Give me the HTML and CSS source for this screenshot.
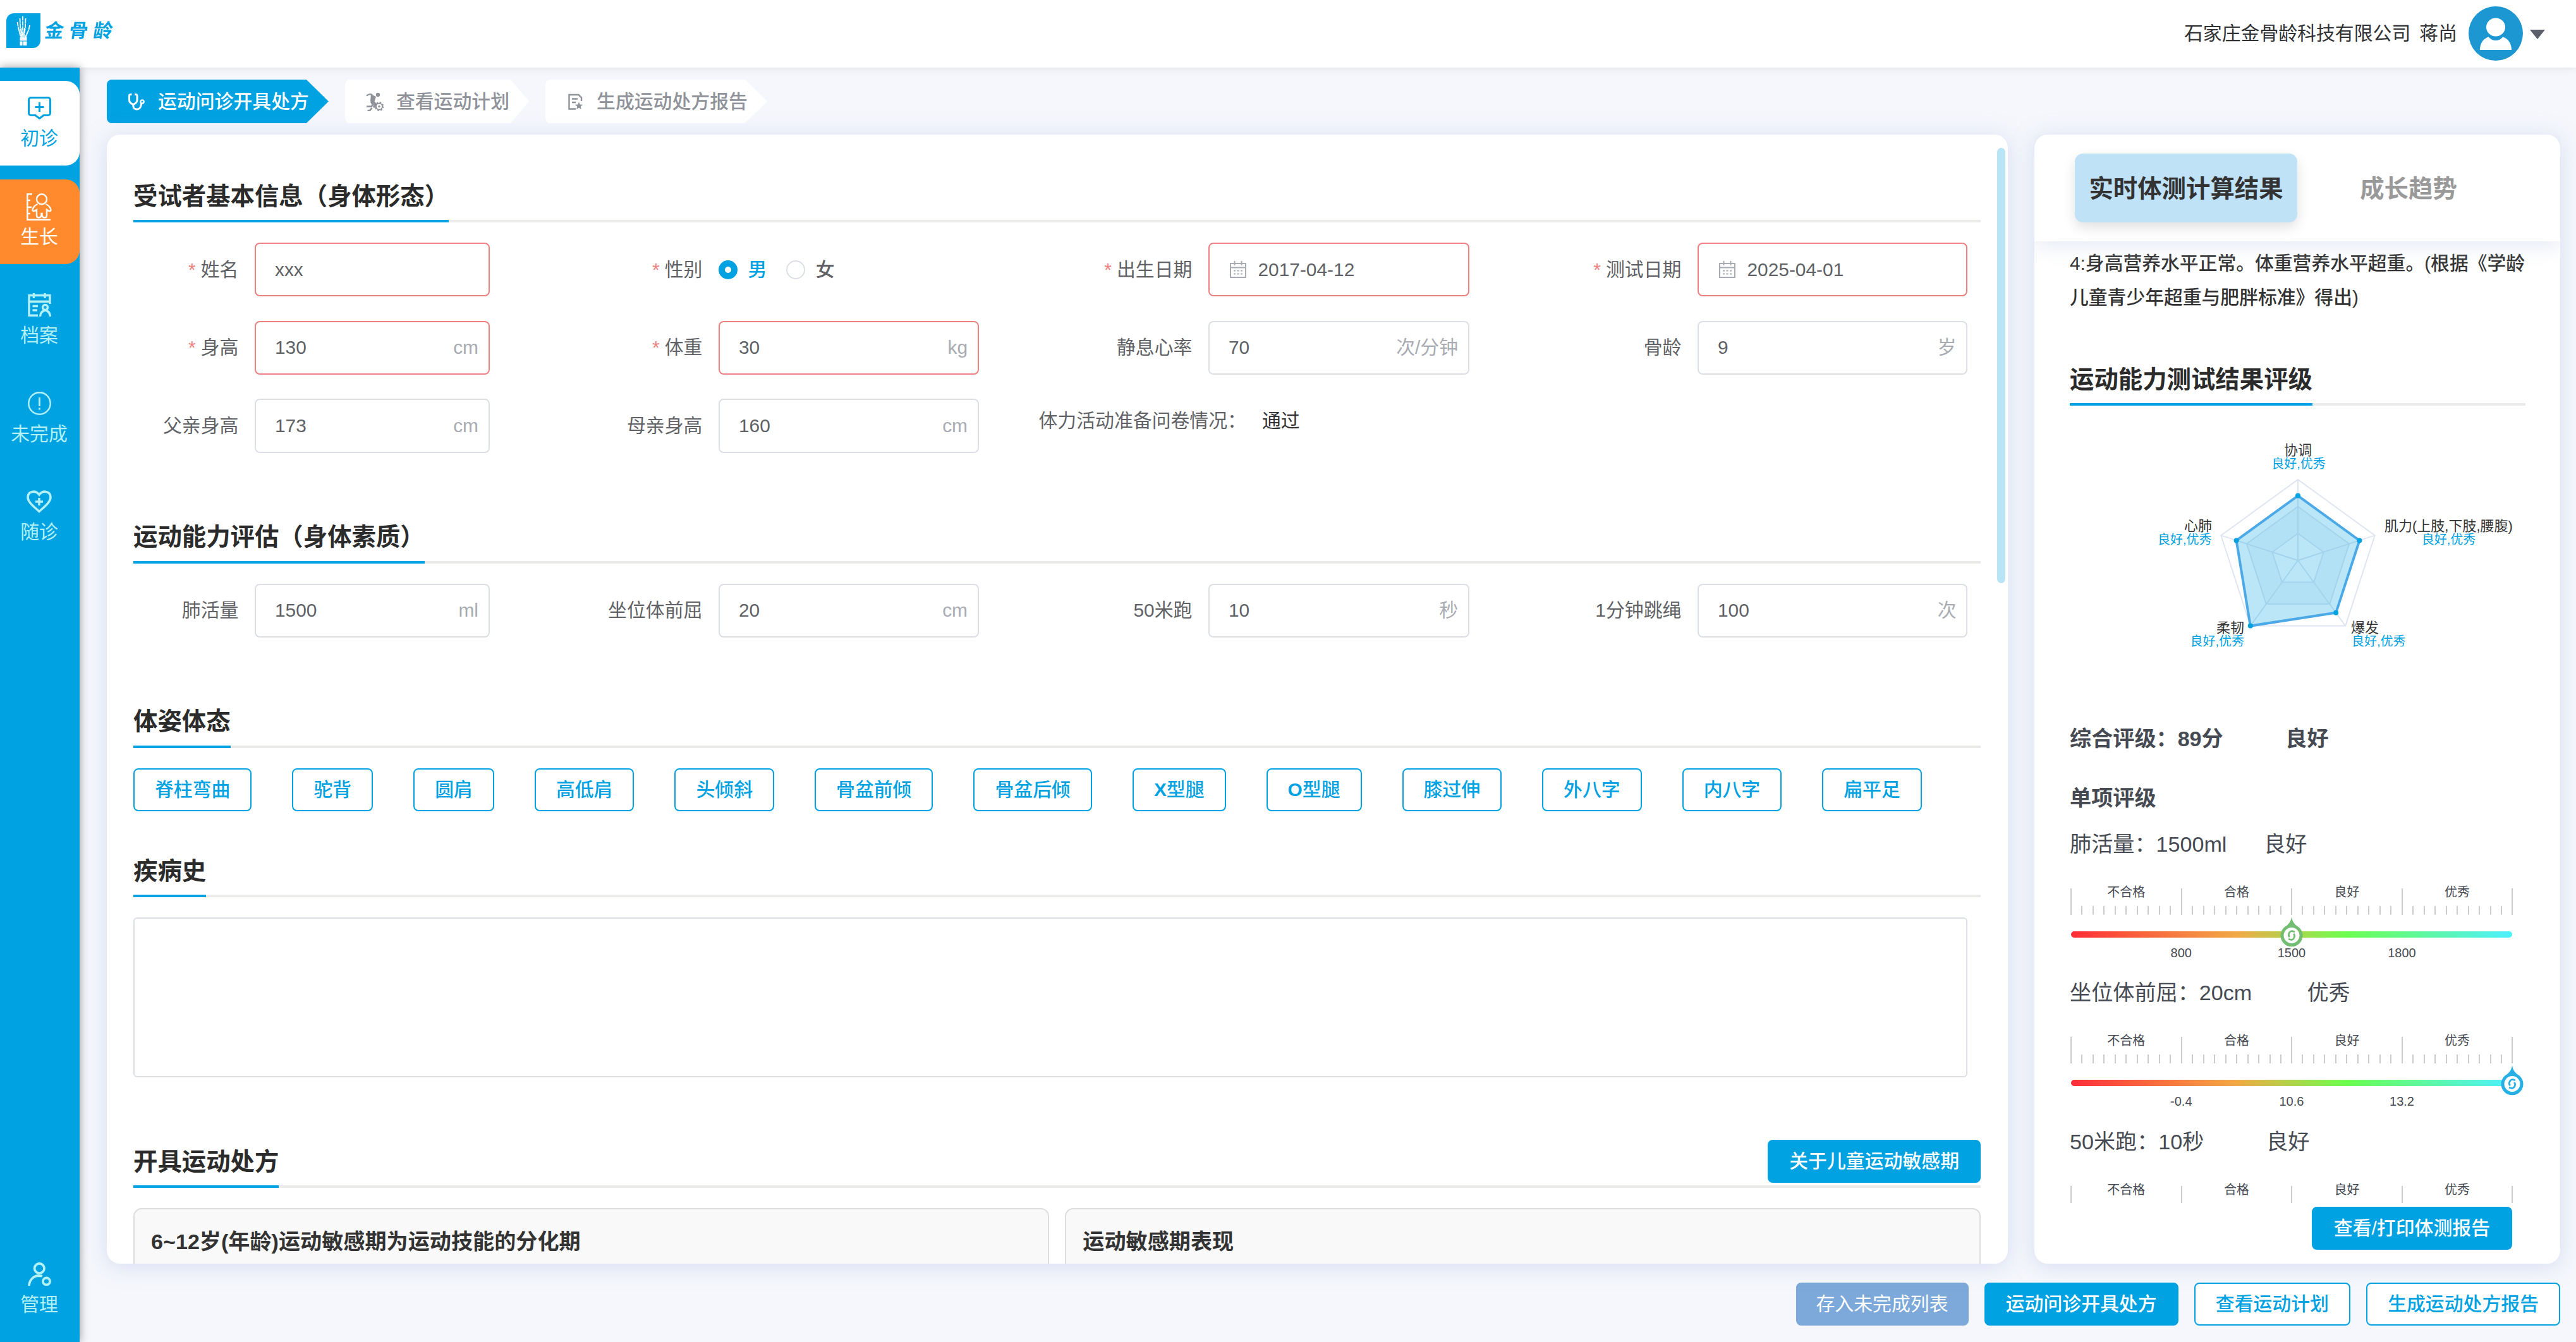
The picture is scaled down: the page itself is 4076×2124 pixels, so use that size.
FILE: index.html
```html
<!DOCTYPE html>
<html lang="zh-CN">
<head>
<meta charset="utf-8">
<title>金骨龄</title>
<link rel="stylesheet" href="styles.css">
</head>
<body>
<svg class="defs" width="0" height="0" aria-hidden="true">
  <symbol id="i-cal" viewBox="0 0 28 27"><path d="M2 4h24v22H2zM2 10.500h24M8.500 0v7M19.500 0v7" fill="none" stroke="currentColor" stroke-width="2"/><path d="M7 15.500h3M12.500 15.500h3M18 15.500h3M7 20.500h3M12.500 20.500h3M18 20.500h3" stroke="currentColor" stroke-width="2"/></symbol>
  <symbol id="i-pin" viewBox="0 0 36 48"><path d="M18 0C19 7 22 11 26.500 14.500A17.500 17.500 0 1 1 9.500 14.500C14 11 17 7 18 0z" fill="currentColor"/><circle cx="18" cy="29.500" r="12.500" fill="#fff"/><path transform="rotate(22 18 29.500)" d="M20.500 22.500h-2.500a5 5 0 0 0-5 5v1.500c0 2 1 3 3 4M15.500 36.500h2.500a5 5 0 0 0 5-5V30c0-2-1-3-3-4" fill="none" stroke="currentColor" stroke-width="2.800"/></symbol>
</svg>

<header class="topbar">
  <div class="brand">
    <svg class="brand-mark" width="54" height="55" viewBox="0 0 54 55">
      <path d="M12 0H54V43a12 12 0 0 1-12 12H0V12A12 12 0 0 1 12 0z" fill="#00a2e2"/>
      <g stroke="#fff" stroke-width="1.800" fill="none">
        <path d="M17.500 14l1.500 9 4 15M21.500 8l.5 14 3 15M26 4.500V37M30.500 8l-.5 14-2 15M37 19l-1.500 7-5 12" stroke-dasharray="7 1"/>
        <path d="M19.500 24l4.500 13M23.500 23l1.500 14M28.500 23l-1 14M33.500 30l-4 8" stroke-width="1.200"/>
      </g>
      <path d="M21.500 37.500h11v6h-11zM21.500 44.500h4v6.500h-4zM26.500 44.500h6v6.500h-6z" fill="#fff"/>
    </svg>
    <span class="brand-name">金骨龄</span>
  </div>
  <div class="account">
    <span class="org">石家庄金骨龄科技有限公司</span>
    <span class="user">蒋尚</span>
    <svg class="avatar" width="86" height="86" viewBox="0 0 86 86"><circle cx="43" cy="43" r="43" fill="#1d97d1"/><path d="M18 69C18 57 25 50 32 48.500c3 4 6.500 5.500 11 5.500s8-1.500 11-5.500C62 50.500 68 58 68 69z" fill="#fff"/><ellipse cx="43" cy="33" rx="15" ry="14.500" fill="#fff"/></svg>
    <i class="caret"></i>
  </div>
</header>

<div class="shell">
  <nav class="side">
    <a class="nav current">
      <svg width="37" height="36" viewBox="0 0 37 36" fill="none" stroke="currentColor" stroke-width="3"><path d="M5 1.500H32a3.500 3.500 0 0 1 3.500 3.500V26a3.500 3.500 0 0 1-3.500 3.500H25l-6.500 5L12 29.500H5A3.500 3.500 0 0 1 1.500 26V5A3.500 3.500 0 0 1 5 1.500zM18.500 9v15M11.500 16.500h14"/></svg>
      <span>初诊</span>
    </a>
    <a class="nav growth">
      <svg width="40" height="43" viewBox="0 0 40 43" fill="none" stroke="currentColor" stroke-width="2.400"><path d="M9 1.300H1.300V41.700H38M1.300 11H6M1.300 22H8M1.300 32H6"/><ellipse cx="24" cy="9.300" rx="8" ry="8"/><path d="M17.500 17C13 19 10 23 9.500 26.500c0 2.500 3.500 2 6.500-.5V35c0 4.500 6.500 4.500 7.500 0v-3h1v3c1 4.500 7.500 4.500 7.500 0V26c3 2.500 6.500 3 6.500.5C38 23 35 19 30.500 17"/></svg>
      <span>生长</span>
    </a>
    <a class="nav">
      <svg width="37" height="37" viewBox="0 0 37 37" fill="none" stroke="currentColor" stroke-width="3.400"><path d="M35 17V3.500H2V35.200H16M2 13.200H35M9.500 0V8M27 0V8M7.500 20.500H16M7.500 27H15"/><circle cx="27.500" cy="22.500" r="4"/><path d="M19.500 37c.5-6 3-9 8-10 5 1 7.500 4 8 10"/></svg>
      <span>档案</span>
    </a>
    <a class="nav">
      <svg width="37" height="37" viewBox="0 0 37 37" fill="none" stroke="currentColor" stroke-width="2.400"><circle cx="18.500" cy="18.500" r="17.200"/><path d="M18.500 9V23M18.500 25.500V28.500" stroke-width="2.800"/></svg>
      <span>未完成</span>
    </a>
    <a class="nav">
      <svg width="40" height="36" viewBox="0 0 40 36" fill="none" stroke="currentColor" stroke-width="3.600"><path d="M20 33.500C13 27 2 19 2 11 2 1.500 14-1 20 7 26-1 38 1.500 38 11 38 19 27 27 20 33.500z"/><path d="M20 12V24M14 18H26"/></svg>
      <span>随诊</span>
    </a>
    <a class="nav manage">
      <svg width="37" height="37" viewBox="0 0 37 37" fill="none" stroke="currentColor" stroke-width="3.800"><circle cx="18.300" cy="9.500" r="7.700"/><path d="M2 37C2.500 27 10 21 17 21l6 .7"/><circle cx="29.500" cy="30" r="5.500"/></svg>
      <span>管理</span>
    </a>
  </nav>

  <main class="page">
    <div class="steps">
      <div class="step on">
        <svg width="30" height="30" viewBox="0 0 30 30" fill="none" stroke="currentColor" stroke-width="3"><path d="M8.500 3.500H7A2.500 2.500 0 0 0 4.500 6V12c0 3.500 2.500 6 6.300 7.300C14.500 18 17 15.500 17 12V6a2.500 2.500 0 0 0-2.500-2.500H13M10.800 19v2.500c0 3.500 2.500 5.500 5.700 5.500s6-2.500 6.500-6l1-3.500"/><circle cx="25" cy="15" r="2.600" stroke-width="2.400"/></svg>
        <span>运动问诊开具处方</span>
      </div>
      <div class="step">
        <svg width="30" height="30" viewBox="0 0 30 30" fill="none" stroke="currentColor"><circle cx="21" cy="4" r="3.200" fill="currentColor" stroke="none"/><path d="M3 5.500C6 3 9 2.500 12 4" stroke-width="2.400"/><path d="M10 3l8 4-2.500 7.500L19 18l-2 7-4-1 1-5-5-5z" fill="currentColor" stroke="none"/><path d="M10 14.500l2.500 5-1.500 3H3M11.500 25L8 29H4.500" stroke-width="2.600"/><circle cx="23" cy="22.500" r="5" stroke-width="1.800" fill="#fff"/><circle cx="23" cy="22.500" r="6.400" stroke-width="1.800" stroke-dasharray="2.500 2.520"/><circle cx="23" cy="22.500" r="1.700" fill="currentColor" stroke="none"/></svg>
        <span>查看运动计划</span>
      </div>
      <div class="step">
        <svg width="30" height="30" viewBox="0 0 30 30" fill="none" stroke="currentColor" stroke-width="2.400"><path d="M26 14V8.500L21.500 4H6.500V26.500H17M11 10.500H20M11 16H17"/><path d="M22 15.500l1.800 3.900 4.200.4-3.200 2.800 1 4.200-3.800-2.200-3.800 2.200 1-4.200L16 19.800l4.200-.4z" fill="currentColor" stroke="none"/></svg>
        <span>生成运动处方报告</span>
      </div>
    </div>

    <div class="columns">
      <section class="card form-card">
        <i class="scroll-thumb"></i>
        <div class="sec-head first"><h2>受试者基本信息（身体形态）</h2></div>
        <div class="fields">
          <label class="req">姓名</label><div class="input must"><b>xxx</b></div>
          <label class="req">性别</label>
          <div class="radios"><i class="dot picked"></i><span class="picked-text">男</span><i class="dot"></i><span>女</span></div>
          <label class="req">出生日期</label><div class="input must"><svg width="28" height="27"><use href="#i-cal"/></svg><b>2017-04-12</b></div>
          <label class="req">测试日期</label><div class="input must"><svg width="28" height="27"><use href="#i-cal"/></svg><b>2025-04-01</b></div>

          <label class="req">身高</label><div class="input must"><b>130</b><em>cm</em></div>
          <label class="req">体重</label><div class="input must"><b>30</b><em>kg</em></div>
          <label>静息心率</label><div class="input"><b>70</b><em>次/分钟</em></div>
          <label>骨龄</label><div class="input"><b>9</b><em>岁</em></div>

          <label>父亲身高</label><div class="input"><b>173</b><em>cm</em></div>
          <label>母亲身高</label><div class="input"><b>160</b><em>cm</em></div>
          <div class="survey"><span>体力活动准备问卷情况：</span><strong>通过</strong></div>
        </div>

        <div class="sec-head"><h2>运动能力评估（身体素质）</h2></div>
        <div class="fields">
          <label>肺活量</label><div class="input"><b>1500</b><em>ml</em></div>
          <label>坐位体前屈</label><div class="input"><b>20</b><em>cm</em></div>
          <label>50米跑</label><div class="input"><b>10</b><em>秒</em></div>
          <label>1分钟跳绳</label><div class="input"><b>100</b><em>次</em></div>
        </div>

        <div class="sec-head"><h2>体姿体态</h2></div>
        <div class="chips">
          <button class="btn line">脊柱弯曲</button><button class="btn line">驼背</button><button class="btn line">圆肩</button><button class="btn line">高低肩</button><button class="btn line">头倾斜</button><button class="btn line">骨盆前倾</button><button class="btn line">骨盆后倾</button><button class="btn line"><b>X</b>型腿</button><button class="btn line"><b>O</b>型腿</button><button class="btn line">膝过伸</button><button class="btn line">外八字</button><button class="btn line">内八字</button><button class="btn line">扁平足</button>
        </div>

        <div class="sec-head near"><h2>疾病史</h2></div>
        <div class="history"></div>

        <div class="sec-head with-action"><h2>开具运动处方</h2><button class="btn solid">关于儿童运动敏感期</button></div>
        <div class="panels">
          <div class="panel">6~12岁(年龄)运动敏感期为运动技能的分化期</div>
          <div class="panel">运动敏感期表现</div>
        </div>
      </section>

      <aside class="card result-card">
        <div class="tabs"><div class="tab active">实时体测计算结果</div><div class="tab">成长趋势</div></div>
        <div class="result-scroll">
          <p class="note">4:身高营养水平正常。体重营养水平超重。(根据《学龄儿童青少年超重与肥胖标准》得出)</p>
          <div class="sec-head sub"><h2>运动能力测试结果评级</h2></div>
          <svg class="radar" width="721" height="420" viewBox="3275 642 721 420">
            <g fill="none" stroke="#e0e6f1" stroke-width="2">
              <path d="M3636 801.700L3717.100 860.600 3686.200 956 3585.800 956 3554.900 860.600z" fill="#f5f7fb"/>
              <path d="M3636 844.300L3676.600 873.800 3661.100 921.500 3610.900 921.500 3595.400 873.800z" fill="#fff"/>
              <path d="M3636 759L3757.700 847.400 3711.200 990.600 3560.800 990.600 3514.300 847.400z"/>
              <path d="M3636 887V759M3636 887L3757.700 847.400M3636 887L3711.200 990.600M3636 887L3560.800 990.600M3636 887L3514.300 847.400"/>
            </g>
            <path d="M3636 784.600L3733.400 855.400 3696.200 969.800 3560.800 990.600 3538.600 855.400z" fill="#00a2e2" fill-opacity=".27" stroke="#4ba9e8" stroke-width="4"/>
            <g fill="#00a2e2"><circle cx="3636" cy="784.600" r="4"/><circle cx="3733.400" cy="855.400" r="4"/><circle cx="3696.200" cy="969.800" r="4"/><circle cx="3560.800" cy="990.600" r="4"/><circle cx="3538.600" cy="855.400" r="4"/></g>
            <g class="axis">
              <text x="3636" y="720" text-anchor="middle">协调</text>
              <text x="3874.500" y="840" text-anchor="middle">肌力(上肢,下肢,腰腹)</text>
              <text x="3500" y="840" text-anchor="end">心肺</text>
              <text x="3551" y="1001" text-anchor="end">柔韧</text>
              <text x="3720" y="1001">爆发</text>
            </g>
            <g class="grade">
              <text x="3637" y="740.500" text-anchor="middle">良好,优秀</text>
              <text x="3874.500" y="861" text-anchor="middle">良好,优秀</text>
              <text x="3499.500" y="861" text-anchor="end">良好,优秀</text>
              <text x="3551" y="1022" text-anchor="end">良好,优秀</text>
              <text x="3721" y="1022">良好,优秀</text>
            </g>
          </svg>
          <div class="line-item strong overall">综合评级：<span class="val">89分</span>良好</div>
          <div class="line-item strong single">单项评级</div>

          <div class="metric">
            <div class="line-item">肺活量：<span class="val">1500ml</span>良好</div>
            <div class="ruler"><span>不合格</span><span>合格</span><span>良好</span><span>优秀</span></div>
            <div class="bar"><svg class="pin good" width="36" height="48"><use href="#i-pin"/></svg></div>
            <div class="marks"><span>800</span><span>1500</span><span>1800</span></div>
          </div>
          <div class="metric">
            <div class="line-item">坐位体前屈：<span class="val">20cm</span>优秀</div>
            <div class="ruler"><span>不合格</span><span>合格</span><span>良好</span><span>优秀</span></div>
            <div class="bar"><svg class="pin best" width="36" height="48"><use href="#i-pin"/></svg></div>
            <div class="marks"><span>-0.4</span><span>10.6</span><span>13.2</span></div>
          </div>
          <div class="metric">
            <div class="line-item">50米跑：<span class="val">10秒</span>良好</div>
            <div class="ruler"><span>不合格</span><span>合格</span><span>良好</span><span>优秀</span></div>
          </div>
        </div>
        <div class="result-foot"><button class="btn solid report">查看/打印体测报告</button></div>
      </aside>
    </div>

    <footer class="actions">
      <button class="btn muted">存入未完成列表</button>
      <button class="btn solid">运动问诊开具处方</button>
      <button class="btn line">查看运动计划</button>
      <button class="btn line">生成运动处方报告</button>
    </footer>
  </main>
</div>
</body>
</html>
```
FILE: styles.css
```css
* { box-sizing: border-box; }
body {
  margin: 0;
  width: 4076px;
  height: 2124px;
  overflow: hidden;
  display: flex;
  flex-direction: column;
  background: #f5f7fc;
  color: #303133;
  font: 29.87px/48px "Liberation Sans", "Noto Sans CJK SC", sans-serif;
}
h2, p { margin: 0; font-weight: 500; }
i, em { font-style: normal; }
.defs { position: absolute; }
svg { display: block; flex: none; }

/* top bar */
.topbar {
  height: 107px;
  flex: none;
  display: flex;
  justify-content: space-between;
  background: #fff;
  box-shadow: 0 2px 12px rgba(0, 0, 0, .08);
}
.brand { display: flex; align-items: flex-start; padding: 21px 0 0 10px; gap: 7px; }
.brand-name {
  color: #00a2e2;
  font-size: 30px;
  font-weight: 700;
  letter-spacing: 8.500px;
  line-height: 56px;
  transform: skewX(-8deg);
}
.account { display: flex; align-items: center; height: 106px; padding-right: 49px; }
.user { margin: 0 18px 0 14px; }
.caret {
  margin: 3px 0 0 11px;
  border: 12px solid transparent;
  border-top: 15px solid #5b5f6b;
  border-bottom: 0;
}

/* side navigation */
.shell { flex: 1; min-height: 0; display: flex; }
.side {
  width: 126px;
  flex: none;
  display: flex;
  flex-direction: column;
  gap: 21.600px;
  padding: 21px 0 16px;
  background: #00a2e2;
  box-shadow: 0 0 14px rgba(0, 0, 0, .4);
}
.nav {
  height: 134.200px;
  display: flex;
  flex-direction: column;
  align-items: center;
  justify-content: flex-end;
  gap: 6px;
  padding: 0 2px 19px 0;
  color: #b3f1f6;
  border-radius: 0 22px 22px 0;
}
.nav svg { margin: auto 0 0; }
.current { background: #fff; color: #00a2e2; }
.growth { background: #ff8a2d; color: #fff; gap: 2px; }
.manage { margin-top: auto; }

/* page */
.page { flex: 1; display: flex; flex-direction: column; padding: 19px 25px 0 43px; }
.steps { display: flex; gap: 26px; height: 69px; }
.step {
  display: flex;
  align-items: center;
  gap: 20px;
  padding: 0 31px 0 31px;
  background: #fff;
  color: #8f9299;
  font-weight: 500;
  border-radius: 8px;
  clip-path: polygon(0 0, 90% 0, 100% 50%, 90% 100%, 0 100%);
}
.step.on { background: #00a2e2; color: #fff; }
.columns { display: flex; gap: 42px; margin-top: 18px; height: 1787px; }
.card {
  background: #fff;
  border-radius: 21px;
  box-shadow: 0 4px 32px rgba(185, 195, 235, .5);
}

/* form */
.form-card {
  position: relative;
  width: 3008px;
  padding: 72px 43px 0 42px;
  overflow: hidden;
}
.scroll-thumb {
  position: absolute;
  top: 21px;
  right: 4px;
  width: 13px;
  height: 689px;
  border-radius: 7px;
  background: #b9e4f5;
}
.sec-head {
  display: flex;
  justify-content: space-between;
  align-items: flex-end;
  height: 67px;
  margin-top: 108px;
  border-bottom: 4px solid #eaeae9;
}
.sec-head h2 {
  margin-bottom: -4px;
  padding-bottom: 13.500px;
  border-bottom: 4px solid #00a2e2;
  font-size: 38.400px;
  font-weight: 700;
  line-height: 48px;
  color: #2b2b2b;
}
.sec-head.first { margin-top: 0; }
.sec-head.near { margin-top: 69px; }
.sec-head.with-action { margin-top: 98px; height: 77px; }
.with-action .btn { margin-bottom: 4px; }
.fields {
  display: grid;
  grid-template-columns: 192px 371.500px 362.500px 411.500px 363.500px 412.500px 361.500px 427px;
  grid-auto-rows: 85.300px;
  row-gap: 38.400px;
  margin-top: 32px;
  color: #606266;
}
.fields label {
  display: flex;
  align-items: center;
  justify-content: flex-end;
  padding-right: 25.600px;
}
.req::before { content: "*"; margin-right: 8px; color: #f08080; }
.input {
  display: flex;
  align-items: center;
  padding: 0 15.500px 0 30px;
  border: 2px solid #dcdfe6;
  border-radius: 8px;
}
.input.must { border-color: #ee8080; }
.input b { font-weight: 400; }
.input em { margin-left: auto; color: #a8abb2; }
.input svg { margin: 0 17.500px 0 1px; color: #a8abb2; }
.radios { display: flex; align-items: center; font-weight: 500; }
.radios span { margin: 0 31px 0 16.500px; }
.dot { width: 30px; height: 30px; border: 2px solid #dcdfe6; border-radius: 50%; }
.dot.picked { border: 10px solid #00a2e2; }
.picked-text { color: #00a2e2; }
.survey {
  grid-column: 5 / span 3;
  display: flex;
  height: 70px;
  align-items: center;
  padding-left: 95px;
}
.survey strong { margin-left: 25px; font-weight: 400; color: #303133; }
.chips { display: flex; gap: 64px; margin-top: 32px; }
.history {
  width: 2902px;
  height: 253px;
  margin-top: 32px;
  border: 2px solid #dcdfe6;
  border-radius: 6px;
}
.panels { display: flex; gap: 25.600px; margin-top: 32px; }
.panel {
  flex: 1;
  height: 240px;
  padding: 27px 26px;
  border: 2px solid #dcdddd;
  border-radius: 13px;
  background: #f9f9f9;
  color: #333;
  font-size: 34.130px;
  font-weight: 700;
}

/* buttons */
.btn {
  height: 68.300px;
  flex: none;
  padding: 0 32px;
  border: 2px solid #00a2e2;
  border-radius: 8px;
  background: #fff;
  color: #00a2e2;
  font: 500 29.870px/48px "Liberation Sans", "Noto Sans CJK SC", sans-serif;
  white-space: nowrap;
}
.btn.solid { background: #00a2e2; color: #fff; }
.btn.muted { padding: 0 30px; background: #7ca9d9; border-color: #7ca9d9; color: #fff; font-weight: 400; }
.actions { display: flex; justify-content: flex-end; gap: 25.200px; margin-top: 30px; }

/* results */
.result-card { width: 832px; display: flex; flex-direction: column; }
.tabs {
  height: 169px;
  flex: none;
  display: flex;
  padding: 30px 64px;
  border-radius: 21px 21px 0 0;
  box-shadow: 0 10px 30px rgba(205, 212, 232, .45);
  clip-path: inset(0 0 -40px 0);
}
.tab {
  width: 352px;
  height: 109px;
  border-radius: 13px;
  color: #999;
  font-size: 38.400px;
  font-weight: 700;
  line-height: 112px;
  text-align: center;
}
.tab.active { background: #bfe2f7; color: #333; box-shadow: 0 8px 20px rgba(0, 0, 0, .12); }
.result-scroll {
  height: 1522px;
  flex: none;
  overflow: hidden;
  padding: 8px 55px 0 56px;
}
.note { color: #333; font-size: 29.800px; line-height: 53.500px; margin-right: -2px; }
.sec-head.sub { margin-top: 78px; }
.axis { font-size: 22px; fill: #333; }
.grade { font-size: 20px; fill: #00a2e2; }
.line-item { height: 48px; font-size: 34.130px; color: #464a52; white-space: nowrap; }
.strong { font-weight: 600; }
.val { display: inline-block; width: 170.700px; }
.overall { margin-top: 83px; }
.single { margin-top: 46px; margin-bottom: 24.500px; }
.metric { height: 235.500px; color: #464a52; font-size: 20px; }
.ruler {
  display: flex;
  width: 700.400px;
  height: 42px;
  margin: 46px 0 0 1px;
  border-right: 2px solid #ccc;
}
.ruler span {
  width: 174.600px;
  display: flex;
  flex-direction: column;
  justify-content: space-between;
  align-items: center;
  border-left: 2px solid #ccc;
  line-height: 13px;
}
.ruler span::after {
  content: "";
  width: 100%;
  height: 14px;
  background: repeating-linear-gradient(to right, transparent 0 15.460px, #ccc 15.460px 17.460px);
  clip-path: inset(0 3px 0 0);
}
.bar {
  position: relative;
  width: 698.400px;
  height: 10px;
  margin: 26px 0 0 2px;
  border-radius: 5px;
  background: linear-gradient(to right, #ff2d37, #f2a945 37.500%, #6cff4f 62.500%, #4df0fe);
}
.pin { position: absolute; top: -23px; margin-left: -18px; }
.pin.good { left: 50%; color: #72bd72; }
.pin.best { left: 100%; color: #27b0e6; }
.marks {
  display: flex;
  width: 523.800px;
  margin: 12px 0 0 89px;
  line-height: 24px;
  text-align: center;
}
.marks span { flex: 1; }
.result-foot { display: flex; justify-content: flex-end; padding: 6px 76px 0 0; }
.report { padding: 0 33px; }
```
